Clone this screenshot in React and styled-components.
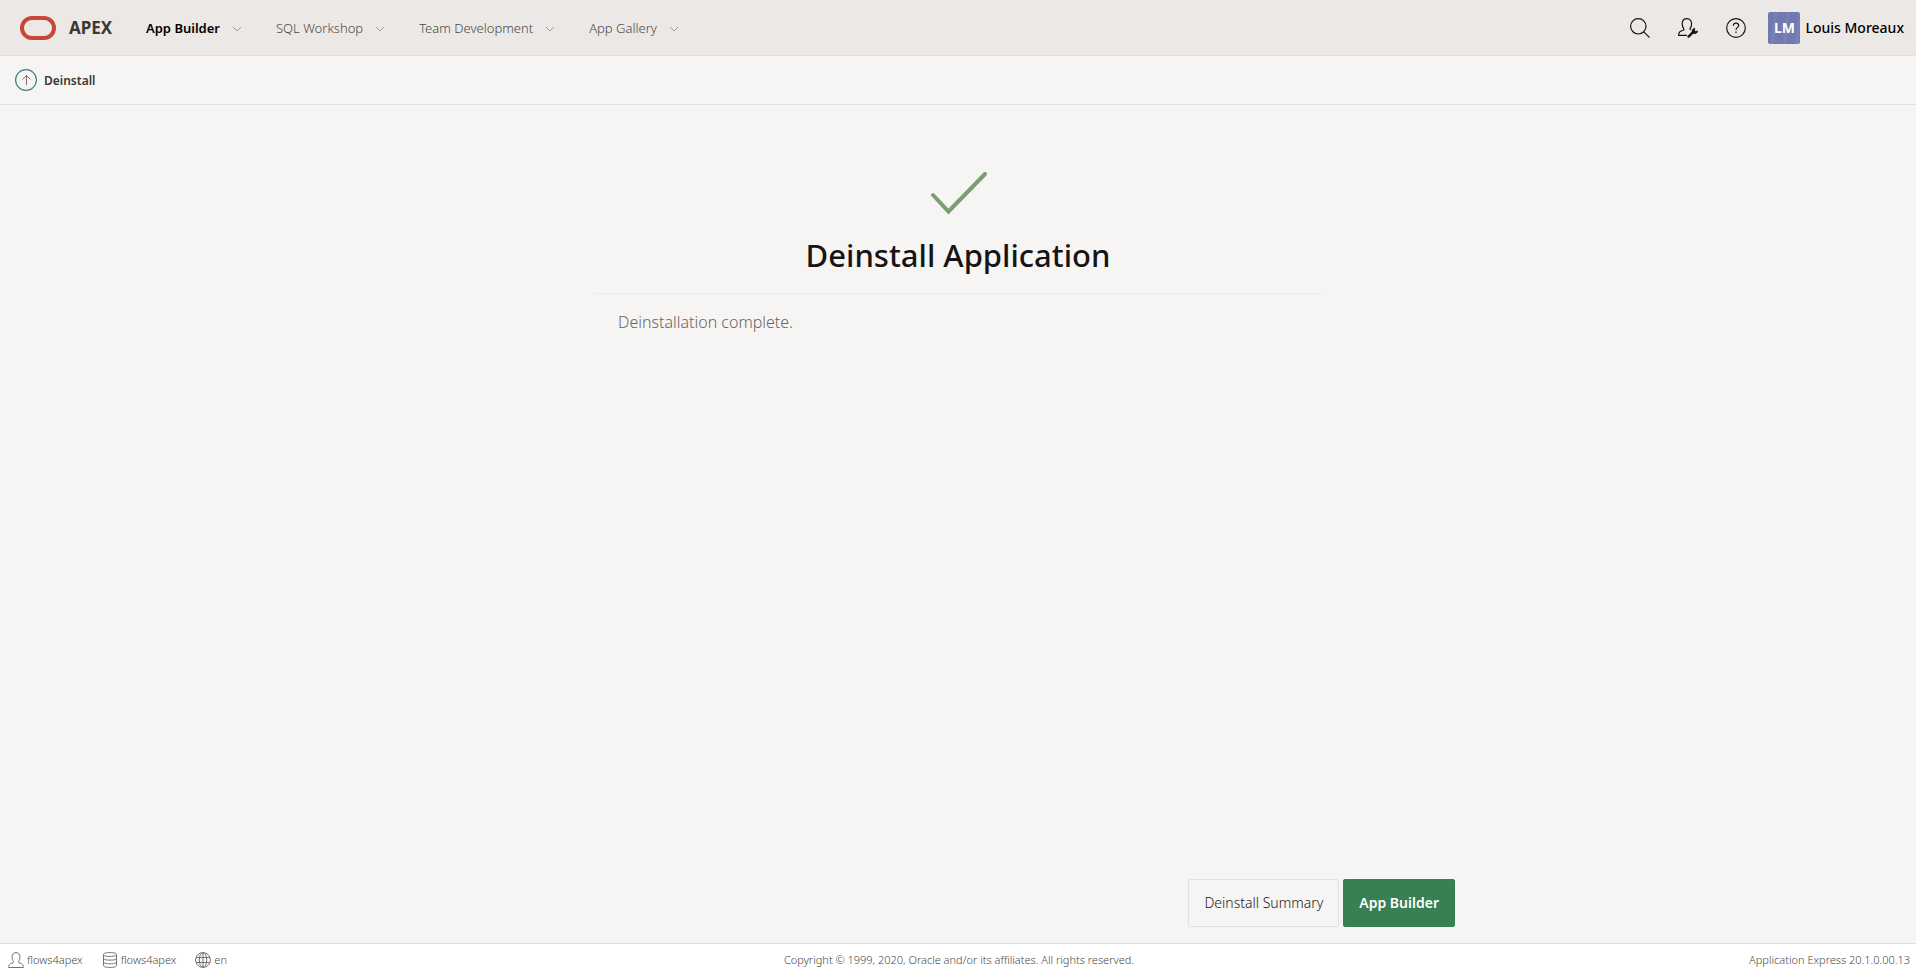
import React from "react";
import styled, { createGlobalStyle } from "styled-components";

const GlobalStyle = createGlobalStyle`
  *, *::before, *::after { box-sizing: border-box; }
  body {
    margin: 0;
    font-family: "Noto Sans", "Open Sans", sans-serif;
    font-size: 13px;
    background: #f6f5f3;
    color: #161513;
  }
  a { color: inherit; text-decoration: none; }
  button { font-family: inherit; cursor: pointer; }
`;

const Page = styled.div`
  display: flex;
  flex-direction: column;
  min-height: 100vh;
`;

const Header = styled.header`
  display: flex;
  align-items: center;
  height: 56px;
  padding: 0 12px 0 20px;
  background: #ece8e5;
  border-bottom: 1px solid #e2e0de;
`;

const Brand = styled.a`
  display: flex;
  align-items: center;
  gap: 13px;
  width: 126px;
  color: #3a3835;
  font-size: 17px;
  font-weight: 700;
  line-height: 24px;
`;

const Nav = styled.nav`
  display: flex;
  gap: 34px;
`;

const NavItem = styled.button`
  display: flex;
  align-items: center;
  gap: 12px;
  padding: 0;
  border: 0;
  background: none;
  font-size: 13px;
  line-height: 20px;
  white-space: nowrap;
  font-weight: ${(p) => (p.$current ? 600 : 300)};
  color: ${(p) => (p.$current ? "#000" : "#4c4844")};
`;

const Tools = styled.div`
  display: flex;
  align-items: center;
  margin-left: auto;
`;

const ToolButton = styled.button`
  display: flex;
  align-items: center;
  justify-content: center;
  width: 48px;
  height: 48px;
  padding: 0;
  border: 0;
  background: none;
  color: #161513;
`;

const Account = styled.button`
  display: flex;
  align-items: center;
  gap: 5px;
  margin-left: 8px;
  padding: 0;
  border: 0;
  background: none;
  color: #000;
  font-size: 14px;
  font-weight: 500;
  line-height: 20px;
`;

const Avatar = styled.span`
  width: 32px;
  height: 32px;
  border-radius: 2px;
  background: repeating-linear-gradient(97deg, #7179ae 0 6px, #7880b4 7px 9px, #7179ae 10px 12px);
  color: #fff;
  font-size: 14px;
  font-weight: 700;
  line-height: 32px;
  text-align: center;
`;

const Breadcrumb = styled.nav`
  display: flex;
  align-items: center;
  gap: 7px;
  height: 49px;
  padding: 0 15px;
  border-bottom: 1px solid #e4e3e1;
  color: #3a3835;
  font-size: 12px;
  font-weight: 600;
`;

const UpLink = styled.a`
  display: flex;
`;

const Main = styled.main`
  display: flex;
  flex: 1;
  flex-direction: column;
  width: 100%;
  max-width: 994px;
  margin: 0 auto;
`;

const Result = styled.section`
  width: 100%;
  max-width: 728px;
  margin: 0 auto;
  padding-top: 67px;
`;

const ResultHeader = styled.div`
  display: flex;
  flex-direction: column;
  align-items: center;
  gap: 15px;
  padding-bottom: 14px;
  border-bottom: 1px solid #ebeae8;
`;

const Title = styled.h1`
  margin: 0;
  font-size: 31px;
  font-weight: 500;
  line-height: 48px;
`;

const Message = styled.p`
  margin: 0;
  padding: 16px 24px;
  color: #686562;
  font-size: 16px;
  font-weight: 300;
  line-height: 24px;
`;

const Actions = styled.div`
  display: flex;
  justify-content: flex-end;
  gap: 4px;
  margin-top: auto;
  padding-bottom: 16px;
`;

const Action = styled.button`
  height: 48px;
  padding: 0 15px;
  border: 1px solid ${(p) => (p.$primary ? "#387f54" : "#e3e1df")};
  border-radius: 2px;
  background: ${(p) => (p.$primary ? "#387f54" : "transparent")};
  color: ${(p) => (p.$primary ? "#fff" : "#1c1a18")};
  font-size: 14px;
  font-weight: ${(p) => (p.$primary ? 600 : 300)};
  line-height: 20px;
`;

const Footer = styled.footer`
  display: grid;
  grid-template-columns: 1fr auto 1fr;
  align-items: center;
  height: 31px;
  padding: 1px 6px 0 8px;
  border-top: 1px solid #e0deda;
  background: #fff;
  color: #4a4744;
  font-size: 11px;
  font-weight: 300;
  line-height: 16px;
`;

const Session = styled.ul`
  display: flex;
  gap: 19px;
  margin: 0;
  padding: 0;
  list-style: none;
`;

const SessionItem = styled.li`
  display: flex;
  align-items: center;
  gap: 3px;

  svg { color: #74716e; }
`;

const Version = styled.span`
  text-align: right;
`;

function Icon({ size = 16, children, ...rest }) {
  return (
    <svg width={size} height={size} viewBox={`0 0 ${size} ${size}`} fill="none" stroke="currentColor" aria-hidden="true" {...rest}>
      {children}
    </svg>
  );
}

const Chevron = () => (
  <svg width="10" height="10" viewBox="0 0 10 10" fill="none" stroke="#a09c98" aria-hidden="true">
    <path d="M1 4 5 8 9 4" />
  </svg>
);

const Logo = () => (
  <svg width="36" height="24" viewBox="0 0 36 24" fill="none" stroke="#c74634" strokeWidth="4" aria-hidden="true">
    <rect x="2" y="2" width="32" height="20" rx="10" />
  </svg>
);

const SearchIcon = () => (
  <Icon size={20} strokeWidth="1.2">
    <circle cx="8.3" cy="8.3" r="7.7" />
    <path d="M13.8 13.8 19.6 19.6" />
  </Icon>
);

const AdminIcon = () => (
  <Icon size={20} strokeWidth="1.2">
    <path d="M9 17.300H.7c0-3.300 1-4 5.100-5.300v-1.300C4.700 9.600 4.200 8 4.200 5.800 4.200 2.600 6 .7 8.900.7s4.700 1.900 4.700 5.100c0 2.200-.5 3.800-1.600 4.900L12.600 12" />
    <path d="M10.600 18.600 16 13.200" strokeWidth="2.400" strokeLinecap="round" />
    <path d="M14.200 14.200C13.600 12 14.800 10.200 17 10.200L16.400 12.200 17.600 13.400 19.700 12.800C19.600 15 17.600 16.400 15.400 15.500Z" fill="currentColor" strokeWidth=".5" />
  </Icon>
);

const HelpIcon = () => (
  <Icon size={20} strokeWidth="1.2">
    <circle cx="10" cy="10" r="9.3" />
    <path d="M7.300 7.600C7.400 6 8.500 5.200 10 5.200s2.700.9 2.700 2.300c0 1.900-2.700 2-2.700 4.500" />
    <path d="M10 13.400v1.400" strokeWidth="1.4" />
  </Icon>
);

const UpIcon = () => (
  <Icon size={22}>
    <circle cx="11" cy="11" r="10.400" stroke="#41818d" strokeWidth="1.2" />
    <path d="M11.500 16V6.500M7.500 10.500l4-4 4 4" stroke="#77706a" />
  </Icon>
);

const UserIcon = () => (
  <Icon>
    <path d="M.6 15.500c0-3.200 1.200-3.900 4.900-4.900V9.400C4.400 8.400 4.100 7 4.100 5.300 4.100 2.400 5.600.6 8 .6s3.900 1.800 3.900 4.700c0 1.700-.3 3.100-1.400 4.100v1.200c3.700 1 4.900 1.700 4.900 4.900Z" />
  </Icon>
);

const DatabaseIcon = () => (
  <Icon>
    <path d="M1.500 2.500C1.500 1.200 4 .6 8 .6s6.500.6 6.500 1.900v11c0 1.300-2.500 1.900-6.500 1.900s-6.500-.6-6.500-1.900Z" />
    <path d="M1.500 2.500C1.500 3.800 4 4.400 8 4.400s6.500-.6 6.500-1.900M1.500 6.200C1.500 7.500 4 8.100 8 8.100s6.500-.6 6.500-1.900M1.500 9.900c0 1.300 2.500 1.900 6.500 1.900s6.500-.6 6.500-1.900" />
  </Icon>
);

const GlobeIcon = () => (
  <Icon>
    <circle cx="8" cy="8" r="7.400" />
    <ellipse cx="8" cy="8" rx="3.700" ry="7.400" />
    <path d="M8 .6v14.800M1.300 5.500h13.400M1.300 10.500h13.400" />
  </Icon>
);

const CheckMark = () => (
  <svg width="58" height="44" viewBox="0 0 58 44" fill="none" stroke="#7a9f70" strokeWidth="4" strokeLinecap="round" aria-hidden="true">
    <path d="M4 23 19.500 39.500 56 2" />
  </svg>
);

const tabs = ["App Builder", "SQL Workshop", "Team Development", "App Gallery"];

export default function App() {
  return (
    <Page>
      <GlobalStyle />
      <Header>
        <Brand href="#">
          <Logo />
          APEX
        </Brand>
        <Nav aria-label="Main">
          {tabs.map((tab, i) => (
            <NavItem key={tab} type="button" $current={i === 0}>
              {tab}
              <Chevron />
            </NavItem>
          ))}
        </Nav>
        <Tools>
          <ToolButton type="button" aria-label="Search"><SearchIcon /></ToolButton>
          <ToolButton type="button" aria-label="Administration"><AdminIcon /></ToolButton>
          <ToolButton type="button" aria-label="Help"><HelpIcon /></ToolButton>
          <Account type="button">
            <Avatar>LM</Avatar>
            Louis Moreaux
          </Account>
        </Tools>
      </Header>
      <Breadcrumb aria-label="Breadcrumb">
        <UpLink href="#" aria-label="Up"><UpIcon /></UpLink>
        Deinstall
      </Breadcrumb>
      <Main>
        <Result>
          <ResultHeader>
            <CheckMark />
            <Title>Deinstall Application</Title>
          </ResultHeader>
          <Message>Deinstallation complete.</Message>
        </Result>
        <Actions>
          <Action type="button">Deinstall Summary</Action>
          <Action type="button" $primary>App Builder</Action>
        </Actions>
      </Main>
      <Footer>
        <Session>
          <SessionItem><UserIcon />flows4apex</SessionItem>
          <SessionItem><DatabaseIcon />flows4apex</SessionItem>
          <SessionItem><GlobeIcon />en</SessionItem>
        </Session>
        <span>Copyright © 1999, 2020, Oracle and/or its affiliates. All rights reserved.</span>
        <Version>Application Express 20.1.0.00.13</Version>
      </Footer>
    </Page>
  );
}
